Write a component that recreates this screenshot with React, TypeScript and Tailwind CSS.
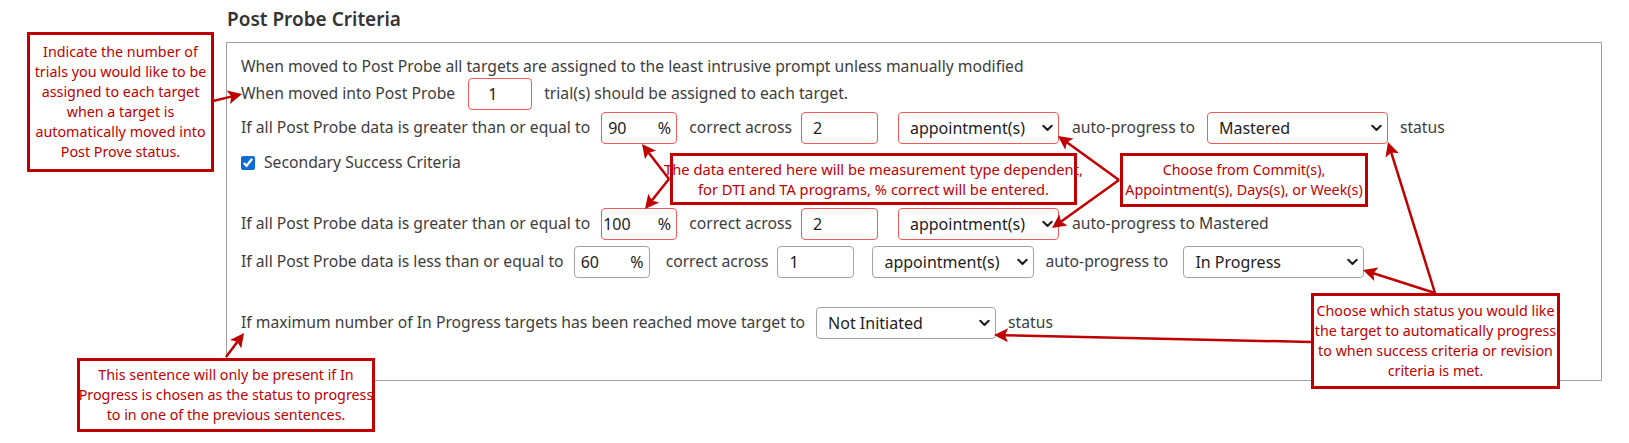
import React from 'react';

type Tone = 'red' | 'gray';

function Chevron() {
  return (
    <svg
      width="11"
      height="7"
      viewBox="0 0 11 7"
      className="pointer-events-none absolute right-[6px] top-1/2 -translate-y-1/2"
    >
      <path d="M1.3 1.3 L5.5 5.5 L9.7 1.3" fill="none" stroke="#1f1f1f" strokeWidth="2.1" strokeLinecap="round" strokeLinejoin="round" />
    </svg>
  );
}

function SelectBox({ value, options, tone, className }: { value: string; options: string[]; tone: Tone; className: string }) {
  return (
    <div className={`relative h-[32px] ${className}`}>
      <select
        defaultValue={value}
        className={`h-full w-full appearance-none rounded-[4px] border bg-white pl-[11px] pr-[24px] text-[16px] text-[#222] outline-none ${
          tone === 'red' ? 'border-[#f05a5a]' : 'border-[#a3a3a3]'
        }`}
      >
        {options.map((o) => (
          <option key={o}>{o}</option>
        ))}
      </select>
      <Chevron />
    </div>
  );
}

function NumberBox({ value, tone, className }: { value: string; tone: Tone; className: string }) {
  return (
    <input
      readOnly
      value={value}
      className={`h-[32px] rounded-[4px] border bg-white text-[16px] text-[#222] outline-none ${
        tone === 'red' ? 'border-[#f05a5a]' : 'border-[#a3a3a3]'
      } ${className}`}
    />
  );
}

function PercentBox({ value, tone, className, pad }: { value: string; tone: Tone; className: string; pad: string }) {
  return (
    <div
      className={`flex h-[32px] w-[76px] items-center rounded-[4px] border bg-white pr-[5px] text-[16px] text-[#222] ${
        tone === 'red' ? 'border-[#f05a5a]' : 'border-[#a3a3a3]'
      } ${className}`}
    >
      <input readOnly value={value} className={`w-[48px] min-w-0 flex-1 bg-transparent outline-none ${pad}`} />
      <span>%</span>
    </div>
  );
}

const units = ['appointment(s)', 'commit(s)', 'day(s)', 'week(s)'];
const statuses = ['Mastered', 'In Progress', 'Not Initiated', 'Post Probe'];

function Callout({ className, lines }: { className: string; lines: string[] }) {
  return (
    <div
      className={`absolute flex flex-col items-center justify-center whitespace-nowrap border-[3px] border-[#c00000] bg-white text-center leading-[20px] text-[#c00000] ${className}`}
    >
      {lines.map((l) => (
        <span key={l}>{l}</span>
      ))}
    </div>
  );
}

function Arrow({ x1, y1, x2, y2 }: { x1: number; y1: number; x2: number; y2: number }) {
  const len = Math.hypot(x2 - x1, y2 - y1);
  const ux = (x2 - x1) / len;
  const uy = (y2 - y1) / len;
  const head = 14;
  const half = 7;
  const bx = x2 - ux * head;
  const by = y2 - uy * head;
  const px = -uy * half;
  const py = ux * half;
  const nx = bx + ux * 3;
  const ny = by + uy * 3;
  return (
    <g>
      <line x1={x1} y1={y1} x2={nx + ux * 1} y2={ny + uy * 1} stroke="#c00000" strokeWidth={2.5} />
      <polygon points={`${x2},${y2} ${bx + px},${by + py} ${nx},${ny} ${bx - px},${by - py}`} fill="#c00000" />
    </g>
  );
}

const arrows = [
  [213, 101, 242, 94],
  [669, 179, 642, 144],
  [669, 179, 645, 209],
  [1119, 180, 1058, 136],
  [1119, 180, 1052, 228],
  [1435, 293, 1388, 142],
  [1435, 293, 1363, 270],
  [1311, 342, 994, 335],
  [226, 357, 244, 333],
];

export default function App() {
  return (
    <div className="relative h-[443px] w-[1629px] overflow-hidden bg-white font-['Noto_Sans',sans-serif] text-[15.7px] text-[#3d3d3d]">
      <div className="pl-[226px]">
        <h2 className="h-[42px] pl-[1px] pt-[7px] text-[19px] font-semibold leading-[24px] text-[#333]">Post Probe Criteria</h2>

        <div className="h-[339px] w-[1376px] whitespace-nowrap border border-[#a0a0a0] pl-[14px] pt-[11px]">
          <div className="h-[24px] leading-[24px]">
            When moved to Post Probe all targets are assigned to the least intrusive prompt unless manually modified
          </div>

          <div className="flex h-[32px] items-center">
            <span>When moved into Post Probe</span>
            <NumberBox value="1" tone="red" className="ml-[13px] w-[64px] pl-[19px]" />
            <span className="ml-[12px]">trial(s) should be assigned to each target.</span>
          </div>

          <div className="mt-[2px] flex h-[32px] items-center">
            <span>If all Post Probe data is greater than or equal to</span>
            <PercentBox value="90" tone="red" pad="pl-[6px]" className="ml-[11px]" />
            <span className="ml-[12px]">correct across</span>
            <NumberBox value="2" tone="red" className="ml-[9px] w-[77px] pl-[11px]" />
            <SelectBox value="appointment(s)" options={units} tone="red" className="ml-[20px] w-[161px]" />
            <span className="ml-[13px]">auto-progress to</span>
            <SelectBox value="Mastered" options={statuses} tone="red" className="ml-[12px] w-[181px]" />
            <span className="ml-[12px]">status</span>
          </div>

          <label className="mt-[7px] flex h-[24px] items-center">
            <input type="checkbox" defaultChecked className="h-[14px] w-[14px] accent-[#0f6cd6]" />
            <span className="ml-[9px]">Secondary Success Criteria</span>
          </label>

          <div className="mt-[33px] flex h-[32px] items-center">
            <span>If all Post Probe data is greater than or equal to</span>
            <PercentBox value="100" tone="red" pad="pl-[1px]" className="ml-[11px]" />
            <span className="ml-[12px]">correct across</span>
            <NumberBox value="2" tone="red" className="ml-[9px] w-[77px] pl-[11px]" />
            <SelectBox value="appointment(s)" options={units} tone="red" className="ml-[20px] w-[161px]" />
            <span className="ml-[13px]">auto-progress to Mastered</span>
          </div>

          <div className="mt-[6px] flex h-[32px] items-center">
            <span>If all Post Probe data is less than or equal to</span>
            <PercentBox value="60" tone="gray" pad="pl-[6px]" className="ml-[10px]" />
            <span className="ml-[16px]">correct across</span>
            <NumberBox value="1" tone="gray" className="ml-[9px] w-[77px] pl-[11px]" />
            <SelectBox value="appointment(s)" options={units} tone="gray" className="ml-[18px] w-[162px]" />
            <span className="ml-[11px]">auto-progress to</span>
            <SelectBox value="In Progress" options={statuses} tone="gray" className="ml-[15px] w-[181px]" />
          </div>

          <div className="mt-[29px] flex h-[32px] items-center">
            <span>If maximum number of In Progress targets has been reached move target to</span>
            <SelectBox value="Not Initiated" options={statuses} tone="gray" className="ml-[11px] w-[180px]" />
            <span className="ml-[12px]">status</span>
          </div>
        </div>
      </div>

      <svg className="pointer-events-none absolute left-0 top-0" width="1629" height="443">
        {arrows.map(([x1, y1, x2, y2], i) => (
          <Arrow key={i} x1={x1} y1={y1} x2={x2} y2={y2} />
        ))}
      </svg>

      <Callout
        className="left-[27px] top-[32px] h-[140px] w-[187px] text-[14.3px]"
        lines={[
          'Indicate the number of',
          'trials you would like to be',
          'assigned to each target',
          'when a target is',
          'automatically moved into',
          'Post Prove status.',
        ]}
      />
      <Callout
        className="left-[670px] top-[153px] h-[52px] w-[407px] text-[14.7px]"
        lines={['The data entered here will be measurement type dependent,', 'for DTI and TA programs, % correct will be entered.']}
      />
      <Callout
        className="left-[1120px] top-[153px] h-[54px] w-[248px] text-[14.3px]"
        lines={['Choose from Commit(s),', 'Appointment(s), Days(s), or Week(s)']}
      />
      <Callout
        className="left-[77px] top-[358px] h-[74px] w-[298px] text-[14.3px]"
        lines={[
          'This sentence will only be present if In',
          'Progress is chosen as the status to progress',
          'to in one of the previous sentences.',
        ]}
      />
      <Callout
        className="left-[1311px] top-[293px] h-[96px] w-[249px] text-[14.3px]"
        lines={[
          'Choose which status you would like',
          'the target to automatically progress',
          'to when success criteria or revision',
          'criteria is met.',
        ]}
      />
    </div>
  );
}
